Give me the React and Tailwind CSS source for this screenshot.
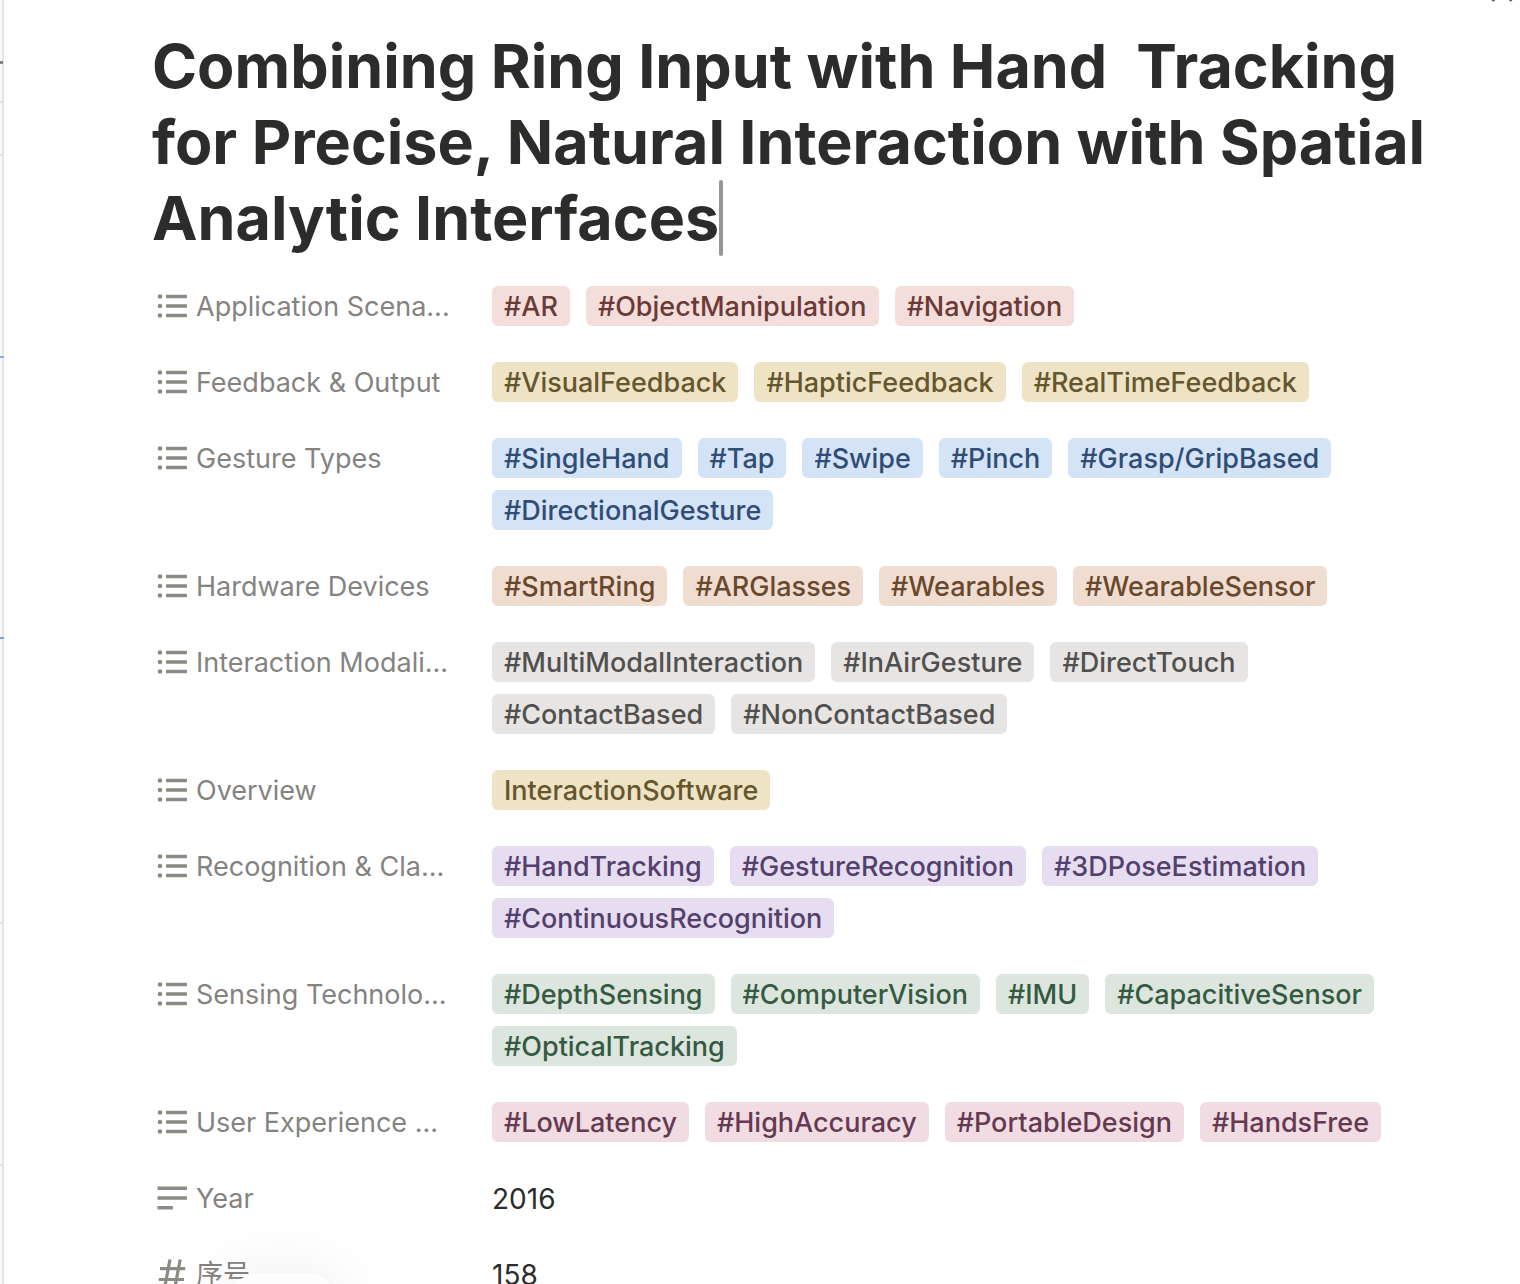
import React from "react";

const TONES = {
  red: "bg-[#f4dedc] text-[#6a3a36]",
  yellow: "bg-[#eee3c5] text-[#65562d]",
  blue: "bg-[#d5e3f7] text-[#304d76]",
  orange: "bg-[#f0ddd1] text-[#69482c]",
  gray: "bg-[#e6e5e3] text-[#51504e]",
  purple: "bg-[#e6ddf0] text-[#54406c]",
  green: "bg-[#dde6de] text-[#355a42]",
  pink: "bg-[#f2dce3] text-[#643a50]",
};

const PROPERTIES = [
  { label: "Application Scena...", tone: "red", tags: ["#AR", "#ObjectManipulation", "#Navigation"] },
  { label: "Feedback & Output", tone: "yellow", tags: ["#VisualFeedback", "#HapticFeedback", "#RealTimeFeedback"] },
  {
    label: "Gesture Types",
    tone: "blue",
    tags: ["#SingleHand", "#Tap", "#Swipe", "#Pinch", "#Grasp/GripBased", "#DirectionalGesture"],
  },
  { label: "Hardware Devices", tone: "orange", tags: ["#SmartRing", "#ARGlasses", "#Wearables", "#WearableSensor"] },
  {
    label: "Interaction Modali...",
    tone: "gray",
    tags: ["#MultiModalInteraction", "#InAirGesture", "#DirectTouch", "#ContactBased", "#NonContactBased"],
  },
  { label: "Overview", tone: "yellow", tags: ["InteractionSoftware"] },
  {
    label: "Recognition & Cla...",
    tone: "purple",
    tags: ["#HandTracking", "#GestureRecognition", "#3DPoseEstimation", "#ContinuousRecognition"],
  },
  {
    label: "Sensing Technolo...",
    tone: "green",
    tags: ["#DepthSensing", "#ComputerVision", "#IMU", "#CapacitiveSensor", "#OpticalTracking"],
  },
  { label: "User Experience ...", tone: "pink", tags: ["#LowLatency", "#HighAccuracy", "#PortableDesign", "#HandsFree"] },
  { label: "Year", icon: "text", value: "2016" },
  { label: "序号", icon: "number", value: "158" },
];

function ListIcon() {
  return (
    <svg viewBox="0 0 32 32" className="size-8 shrink-0" fill="#8b8a83" aria-hidden="true">
      <circle cx="4" cy="6.5" r="2.3" />
      <circle cx="4" cy="16" r="2.3" />
      <circle cx="4" cy="25.5" r="2.3" />
      <rect x="10" y="4.8" width="21" height="3.4" rx="0.6" />
      <rect x="10" y="14.3" width="21" height="3.4" rx="0.6" />
      <rect x="10" y="23.8" width="21" height="3.4" rx="0.6" />
    </svg>
  );
}

function TextIcon() {
  return (
    <svg viewBox="0 0 32 32" className="size-8 shrink-0" fill="#8b8a83" aria-hidden="true">
      <rect x="1.5" y="4.5" width="29.5" height="3.4" rx="0.4" />
      <rect x="1.5" y="14.3" width="29.5" height="3.4" rx="0.4" />
      <rect x="1.5" y="24" width="15.5" height="3.4" rx="0.4" />
    </svg>
  );
}

function NumberIcon() {
  return (
    <svg viewBox="0 0 32 32" className="size-8 shrink-0" fill="none" stroke="#8b8a83" strokeWidth="3.2" aria-hidden="true">
      <path d="M14 1.500 8.400 31M24.200 1.500 18.600 31M4 10.700H29.200M2.800 21.500H28" />
    </svg>
  );
}

const ICONS = { list: ListIcon, text: TextIcon, number: NumberIcon };

function Property({ label, icon = "list", tone, tags, value }) {
  const Icon = ICONS[icon];
  return (
    <div className="flex items-start leading-[42px]">
      <dt className="flex h-10 w-[340px] shrink-0 gap-2 pt-1 pl-1 text-[#84837f]">
        <Icon />
        <span className="-mt-1 whitespace-nowrap">{label}</span>
      </dt>
      <dd className="min-w-0 flex-1">
        {tags ? (
          <ul className="flex flex-wrap gap-x-4 gap-y-3 font-medium">
            {tags.map((tag) => (
              <li key={tag} className={`h-10 rounded-md px-3 ${TONES[tone]}`}>
                {tag}
              </li>
            ))}
          </ul>
        ) : (
          <p className="h-10 text-[28px] text-[#2c2c2b]">{value}</p>
        )}
      </dd>
    </div>
  );
}

function PageEdge() {
  return (
    <div className="flex w-1 shrink-0 flex-col border-r-2 border-[#e5e5e4] bg-[#f9f9f8]" aria-hidden="true">
      <div className="flex h-[101px] flex-col justify-end pb-[37px]">
        <div className="h-[3px] w-[3px] bg-[#858585]" />
      </div>
      <div className="h-[53px] w-1 border-t-2 border-[#e2e1df]" />
      <div className="h-[202px] w-1 border-t-2 border-[#e2e1df]" />
      <div className="h-[281px] w-1 border-t-2 border-[#8aaee0]" />
      <div className="h-[285px] w-1 border-t-2 border-[#7f9fd0]" />
      <div className="h-[242px] w-1 border-t-2 border-[#e2e1df]" />
      <div className="w-1 border-t-2 border-[#e2e1df]" />
    </div>
  );
}

export default function App() {
  return (
    <div className="relative flex h-screen overflow-hidden bg-white font-['Inter','Noto_Sans_CJK_SC',sans-serif]">
      <PageEdge />
      <main className="min-w-0 flex-1 pt-7 pr-20 pl-[148px]">
        <h1 className="text-[61px] leading-[76px] font-bold whitespace-pre-wrap text-[#2c2c2b]">
          {"Combining Ring Input with Hand  Tracking for Precise, Natural Interaction with Spatial Analytic Interfaces"}
          <span className="-mr-1 inline-block h-[76px] w-1 rounded-full bg-[#969696] align-bottom" />
        </h1>
        <dl className="mt-[30px] flex flex-col gap-9 text-[27px]">
          {PROPERTIES.map((property) => (
            <Property key={property.label} {...property} />
          ))}
        </dl>
      </main>
      <button type="button" aria-label="Close" className="absolute -top-5 right-1.5">
        <svg viewBox="0 0 24 24" className="size-6" fill="none" stroke="#555" strokeWidth="2.5">
          <path d="M2 1 21.500 21M22 1 2.500 21" />
        </svg>
      </button>
      <div className="absolute -bottom-[90px] left-[229px] h-[100px] w-[108px] rounded-[28px] border-2 border-white bg-[#fdfdfd] shadow-[0_0_70px_rgba(0,0,0,0.08)]" />
    </div>
  );
}
